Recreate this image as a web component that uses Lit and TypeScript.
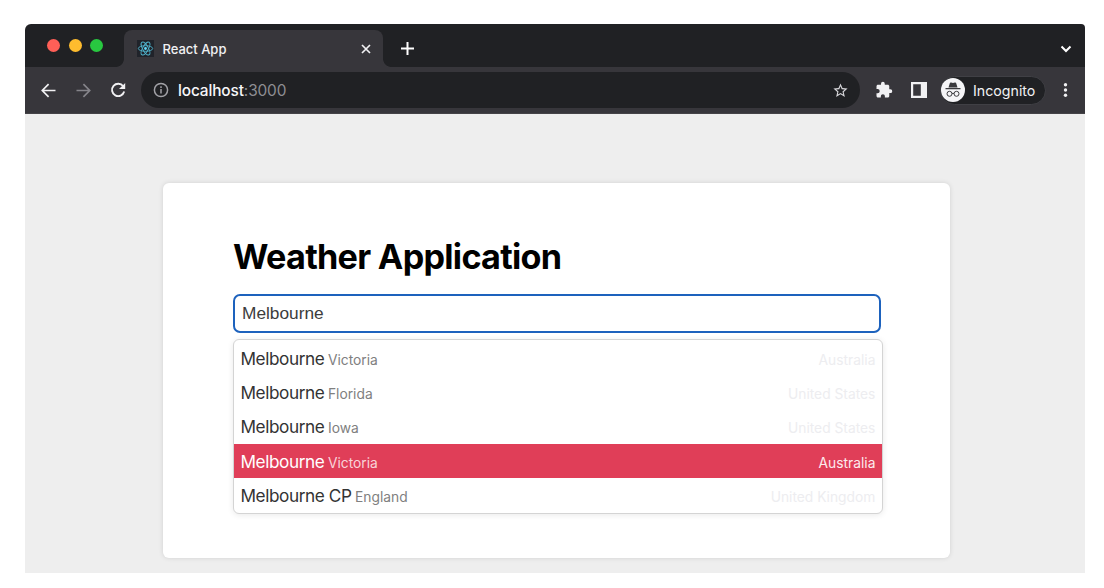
import { LitElement, html, css, svg } from "lit";
import { customElement, state } from "lit/decorators.js";
import { classMap } from "lit/directives/class-map.js";

interface Place {
  city: string;
  region: string;
  country: string;
}

const PLACES: Place[] = [
  { city: "Melbourne", region: "Victoria", country: "Australia" },
  { city: "Melbourne", region: "Florida", country: "United States" },
  { city: "Melbourne", region: "Iowa", country: "United States" },
  { city: "Melbourne", region: "Victoria", country: "Australia" },
  { city: "Melbourne CP", region: "England", country: "United Kingdom" },
];

const ORBITS = [0, 60, 120];

@customElement("browser-chrome")
export class BrowserChrome extends LitElement {
  static styles = css`
    :host {
      display: block;
      color: #f1f1f3;
    }
    svg {
      display: block;
      flex: none;
    }
    .tabs {
      display: flex;
      align-items: flex-end;
      height: 43px;
      background: #202124;
      box-sizing: border-box;
    }
    .lights {
      display: flex;
      gap: 8.4px;
      padding-left: 22px;
      width: 69px;
      height: 43px;
      align-items: center;
    }
    .light {
      width: 13.2px;
      height: 13.2px;
      border-radius: 50%;
      flex: none;
    }
    .red { background: #ff5f57; }
    .amber { background: #febc2e; }
    .green { background: #28c840; }
    .curve {
      width: 8px;
      height: 8px;
      flex: none;
    }
    .curve.left {
      background: radial-gradient(circle at 0 0, #202124 7.5px, #37363b 8.2px);
    }
    .curve.right {
      background: radial-gradient(circle at 100% 0, #202124 7.5px, #37363b 8.2px);
    }
    .tab {
      display: flex;
      align-items: center;
      width: 259px;
      height: 37px;
      box-sizing: border-box;
      padding: 0 11.5px 0 13px;
      border-radius: 8px 8px 0 0;
      background: #37363b;
    }
    .title {
      flex: 1;
      margin-left: 8.5px;
      font-size: 13px;
      font-weight: 500;
      letter-spacing: -0.02px;
    }
    .plus {
      margin: 0 0 11px 8.5px;
    }
    .more {
      margin: 0 13px 13px auto;
    }
    .toolbar {
      display: flex;
      align-items: center;
      height: 47px;
      box-sizing: border-box;
      background: #37363b;
      border-bottom: 1px solid #444347;
    }
    .back { margin-left: 16px; }
    .forward { margin-left: 20px; }
    .reload { margin-left: 18px; }
    .address {
      display: flex;
      align-items: center;
      width: 719px;
      height: 36px;
      margin-left: 14px;
      border-radius: 18px;
      background: #202124;
      box-sizing: border-box;
      padding: 0 11px 0 12px;
    }
    .url {
      flex: 1;
      margin-left: 9px;
      font-size: 15.4px;
      letter-spacing: -0.12px;
      color: #8e8e93;
    }
    .host {
      color: #f7f7f9;
      font-weight: 450;
    }
    .puzzle { margin-left: 15px; }
    .panel { margin-left: 18px; }
    .profile {
      display: flex;
      align-items: center;
      width: 106px;
      height: 29px;
      box-sizing: border-box;
      margin-left: 13px;
      border: 1px solid #404045;
      border-radius: 14.5px;
      background: #202124;
      font-size: 14.2px;
      gap: 8px;
    }
    .dots { margin-left: 17px; }
  `;

  render() {
    return html`
      <div class="tabs">
        <div class="lights">
          <span class="light red"></span>
          <span class="light amber"></span>
          <span class="light green"></span>
        </div>
        <span class="curve left"></span>
        <div class="tab">
          <svg width="17" height="17" viewBox="0 0 17 17">
            <rect width="17" height="17" fill="#20232a" />
            <g fill="none" stroke="#4fb3cc" stroke-width="0.9">
              ${ORBITS.map(
                (a) => svg`<ellipse cx="8.5" cy="8.5" rx="7.2" ry="2.8" transform="rotate(${a} 8.5 8.5)" />`
              )}
            </g>
            <circle cx="8.5" cy="8.5" r="1.4" fill="#61dafb" />
          </svg>
          <span class="title">React App</span>
          <svg width="12" height="12" viewBox="0 0 12 12" stroke="#f1f1f3" stroke-width="1.7">
            <path d="M2 2l8 8M10 2l-8 8" />
          </svg>
        </div>
        <span class="curve right"></span>
        <svg class="plus" width="15" height="15" viewBox="0 0 15 15" stroke="#fff" stroke-width="2">
          <path d="M7.5 1v13M1 7.5h13" />
        </svg>
        <svg class="more" width="12" height="10" viewBox="0 0 12 10" fill="none" stroke="#fff" stroke-width="2">
          <path d="M1.5 2.5L6 7l4.5-4.5" />
        </svg>
      </div>
      <div class="toolbar">
        <svg class="back" width="15" height="15" viewBox="0 0 15 15" fill="none" stroke="#f1f1f3" stroke-width="1.7">
          <path d="M14.5 7.5H1.5M7.6 1.2L1.3 7.5l6.3 6.3" />
        </svg>
        <svg class="forward" width="15" height="15" viewBox="0 0 15 15" fill="none" stroke="#85848a" stroke-width="1.7">
          <path d="M.5 7.5h13M7.4 1.2l6.3 6.3-6.3 6.3" />
        </svg>
        <svg class="reload" width="18" height="18" viewBox="0 0 18 18" fill="none" stroke="#f1f1f3" stroke-width="1.9">
          <path d="M14.2 5.2A6.2 6.2 0 1 0 15.2 10.6" />
          <path d="M16.2 1.9v6.2H10z" fill="#f1f1f3" stroke="none" />
        </svg>
        <div class="address">
          <svg width="16" height="16" viewBox="0 0 16 16" fill="none" stroke="#a2a2a7" stroke-width="1.5">
            <circle cx="8" cy="8" r="6.6" />
            <path d="M8 7v4.5M8 4.3v1.6" />
          </svg>
          <span class="url"><span class="host">localhost</span>:3000</span>
          <svg width="17" height="17" viewBox="0 0 24 24" fill="#d4d4d8">
            <path d="M22 9.24l-7.19-.62L12 2 9.19 8.63 2 9.24l5.46 4.73L5.82 21 12 17.27 18.18 21l-1.63-7.03L22 9.24zM12 15.4l-3.76 2.27 1-4.28-3.32-2.88 4.38-.38L12 6.1l1.71 4.04 4.38.38-3.32 2.88 1 4.28L12 15.4z" />
          </svg>
        </div>
        <svg class="puzzle" width="18" height="18" viewBox="0 0 24 24" fill="#f1f1f3">
          <path d="M20.5 11H19V7c0-1.1-.9-2-2-2h-4V3.5a2.5 2.5 0 0 0-5 0V5H4c-1.1 0-1.99.9-1.99 2v3.8H3.5c1.49 0 2.7 1.21 2.7 2.7s-1.21 2.7-2.7 2.7H2V20c0 1.1.9 2 2 2h3.8v-1.5c0-1.49 1.21-2.7 2.7-2.7s2.7 1.21 2.7 2.7V22H17c1.1 0 2-.9 2-2v-4h1.5a2.5 2.5 0 0 0 0-5z" />
        </svg>
        <svg class="panel" width="16" height="16" viewBox="0 0 16 16">
          <path d="M0 0h16v16H0z" fill="#f1f1f3" />
          <path d="M2.2 2.2h7.6v11.6H2.2z" fill="#37363b" />
        </svg>
        <div class="profile">
          <svg width="24" height="24" viewBox="0 0 24 24">
            <circle cx="12" cy="12" r="12" fill="#f5f5f7" />
            <path d="M8.8 5.2c.2-.6.7-.8 1.3-.6l1.9.5 1.9-.5c.6-.2 1.1 0 1.3.6l1.3 4.4H7.5z" fill="#3a3a3e" />
            <path d="M4.5 10.7h15" stroke="#3a3a3e" stroke-width="1.2" />
            <g fill="none" stroke="#3a3a3e" stroke-width="1">
              <circle cx="8.5" cy="15.8" r="2.5" />
              <circle cx="15.5" cy="15.8" r="2.5" />
              <path d="M11 15.6q1-.8 2 0" />
            </g>
          </svg>
          <span>Incognito</span>
        </div>
        <svg class="dots" width="5" height="16" viewBox="0 0 5 16" fill="#f1f1f3">
          <circle cx="2.5" cy="2.7" r="1.7" />
          <circle cx="2.5" cy="8" r="1.7" />
          <circle cx="2.5" cy="13.3" r="1.7" />
        </svg>
      </div>
    `;
  }
}

@customElement("weather-search")
export class WeatherSearch extends LitElement {
  @state() private query = "Melbourne";
  @state() private active = 3;

  static styles = css`
    :host {
      display: block;
      height: 375.4px;
      box-sizing: border-box;
      padding: 49.5px 67px 0 70px;
      background: #fff;
      border-radius: 6px;
      box-shadow: 0 0 5px rgba(0, 0, 0, 0.12);
    }
    h1 {
      margin: 0;
      height: 48px;
      line-height: 48px;
      font-size: 34.2px;
      font-weight: 700;
      letter-spacing: -0.72px;
      color: #000;
    }
    .field {
      display: block;
      width: 648px;
      height: 39px;
      margin-top: 13px;
      box-sizing: border-box;
      padding: 1px 7px 0;
      border: 2px solid #1d62bd;
      border-radius: 7px;
      outline: none;
      background: #fff;
      color: #3c3c3c;
      font: 17.3px "Liberation Sans", Arial, sans-serif;
    }
    .list {
      width: 650.4px;
      margin: 6.5px 0 0;
      padding: 1px 0 0;
      box-sizing: border-box;
      height: 174.6px;
      list-style: none;
      border: 1.5px solid #d4d4d4;
      border-radius: 6px;
      background: #fff;
      box-shadow: 0 1px 6px rgba(0, 0, 0, 0.09);
    }
    .row {
      display: flex;
      align-items: baseline;
      height: 34.4px;
      line-height: 35px;
      padding: 0 7px 0 6.5px;
      color: #333;
      font-size: 17.2px;
    }
    .row:first-child {
      margin-top: -0.4px;
    }
    .city {
      letter-spacing: -0.42px;
    }
    .region {
      margin-left: 3.6px;
      font-size: 13.8px;
      color: #808080;
    }
    .country {
      margin-left: auto;
      font-size: 13.8px;
      color: #ededf0;
    }
    .row.active {
      background: #e03e58;
      color: #fff;
    }
    .active .region {
      color: #f9d3d9;
    }
    .active .country {
      color: #fdebed;
    }
  `;

  render() {
    return html`
      <h1>Weather Application</h1>
      <input
        class="field"
        spellcheck="false"
        .value=${this.query}
        @input=${(e: Event) => (this.query = (e.target as HTMLInputElement).value)}
      />
      <ul class="list">
        ${PLACES.map(
          (p, i) => html`<li
            class=${classMap({ row: true, active: i === this.active })}
            @mouseenter=${() => (this.active = i)}
          >
            <span class="city">${p.city}</span>
            <span class="region">${p.region}</span>
            <span class="country">${p.country}</span>
          </li>`
        )}
      </ul>
    `;
  }
}

@customElement("app-root")
export class AppRoot extends LitElement {
  static styles = css`
    :host {
      display: block;
      width: 1104px;
      height: 588px;
      box-sizing: border-box;
      padding: 24px 19px 15px 25px;
      background: #fff;
      font-family: Inter, "Liberation Sans", sans-serif;
    }
    .window {
      height: 549px;
      overflow: hidden;
      border-radius: 6px 4px 0 0;
      background: #eeeeee;
    }
    .card {
      width: 787.4px;
      margin: 69px 0 0 138px;
    }
  `;

  render() {
    return html`
      <div class="window">
        <browser-chrome></browser-chrome>
        <weather-search class="card"></weather-search>
      </div>
    `;
  }
}
